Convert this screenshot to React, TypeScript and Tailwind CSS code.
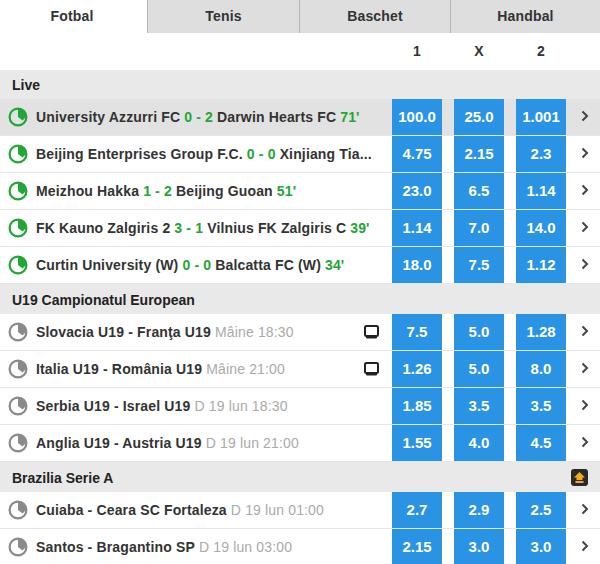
type TRow = {
  home: string;
  score?: string;
  away: string;
  minute?: string;
  time?: string;
  odds: [string, string, string];
  tv?: boolean;
  highlight?: boolean;
};

const tabs = [
  { label: "Fotbal", width: "w-[147px] pr-[3px]" },
  { label: "Tenis", width: "w-[152px]" },
  { label: "Baschet", width: "w-[151px]" },
  { label: "Handbal", width: "w-[150px]" },
];

const liveRows: TRow[] = [
  { home: "University Azzurri FC", score: "0 - 2", away: "Darwin Hearts FC", minute: "71'", odds: ["100.0", "25.0", "1.001"], highlight: true },
  { home: "Beijing Enterprises Group F.C.", score: "0 - 0", away: "Xinjiang Tia...", odds: ["4.75", "2.15", "2.3"] },
  { home: "Meizhou Hakka", score: "1 - 2", away: "Beijing Guoan", minute: "51'", odds: ["23.0", "6.5", "1.14"] },
  { home: "FK Kauno Zalgiris 2", score: "3 - 1", away: "Vilnius FK Zalgiris C", minute: "39'", odds: ["1.14", "7.0", "14.0"] },
  { home: "Curtin University (W)", score: "0 - 0", away: "Balcatta FC (W)", minute: "34'", odds: ["18.0", "7.5", "1.12"] },
];

const u19Rows: TRow[] = [
  { home: "Slovacia U19 - Franţa U19", away: "", time: "Mâine 18:30", odds: ["7.5", "5.0", "1.28"], tv: true },
  { home: "Italia U19 - România U19", away: "", time: "Mâine 21:00", odds: ["1.26", "5.0", "8.0"], tv: true },
  { home: "Serbia U19 - Israel U19", away: "", time: "D 19 lun 18:30", odds: ["1.85", "3.5", "3.5"] },
  { home: "Anglia U19 - Austria U19", away: "", time: "D 19 lun 21:00", odds: ["1.55", "4.0", "4.5"] },
];

const serieRows: TRow[] = [
  { home: "Cuiaba - Ceara SC Fortaleza", away: "", time: "D 19 lun 01:00", odds: ["2.7", "2.9", "2.5"] },
  { home: "Santos - Bragantino SP", away: "", time: "D 19 lun 03:00", odds: ["2.15", "3.0", "3.0"] },
];

function Clock({ live }: { live: boolean }) {
  const color = live ? "#22a637" : "#8a8a8a";
  return (
    <svg width="20" height="20" viewBox="0 0 20 20" className="shrink-0">
      <circle cx="10" cy="10" r="8.4" fill="none" stroke={color} strokeWidth="2.2" />
      <path d="M10 2 A8 8 0 0 1 18 10 L14.5 13.5 L10 10 Z" fill={color} />
    </svg>
  );
}

function TvIcon() {
  return (
    <svg width="15" height="14" viewBox="0 0 15 14" className="shrink-0">
      <rect x="1" y="1" width="13" height="10" rx="1.5" fill="none" stroke="#222" strokeWidth="2" />
      <rect x="2" y="11" width="11" height="2.4" rx="0.8" fill="#222" />
    </svg>
  );
}

function Chevron() {
  return (
    <svg width="8" height="12" viewBox="0 0 8 12">
      <path d="M1.5 1.5 L6 6 L1.5 10.5" fill="none" stroke="#444" strokeWidth="2" />
    </svg>
  );
}

function Row({ row }: { row: TRow }) {
  const live = !!row.score;
  return (
    <div className={`flex h-[37px] border-b border-[#e6e6e6] ${row.highlight ? "bg-[#e2e2e2]" : "bg-white"}`}>
      <div className="flex items-center min-w-0 w-[392px] pl-[8px] pr-[13px]">
        <Clock live={live} />
        <div className="ml-[8px] flex-1 min-w-0 whitespace-nowrap text-[14px] font-bold tracking-[0.15px] text-[#333]">
          {row.home}
          {row.score && <span className="text-[#22a637]"> {row.score} </span>}
          {row.away}
          {row.minute && <span className="text-[#22a637]"> {row.minute}</span>}
          {row.time && <span className="font-normal text-[#aaa]"> {row.time}</span>}
        </div>
        {row.tv && <TvIcon />}
      </div>
      <div className="flex gap-[12px]">
        {row.odds.map((odd, i) => (
          <div
            key={i}
            className="flex items-center justify-center w-[50px] h-[37px] border-b border-[#d9ecfa] bg-[#2b93e3] text-[15px] font-bold text-white"
          >
            {odd}
          </div>
        ))}
      </div>
      <div className="flex flex-1 items-center justify-center pl-[3px] pb-[2px]">
        <Chevron />
      </div>
    </div>
  );
}

function Section({ title, short, badge }: { title: string; short?: boolean; badge?: boolean }) {
  return (
    <div
      className={`flex items-center justify-between bg-[#e9e9e9] pl-[12px] pr-[12px] pt-[2px] text-[14px] font-bold text-[#222] ${
        short ? "h-[29px]" : "h-[30px]"
      }`}
    >
      <span>{title}</span>
      {badge && (
        <span className="-mt-[2px] flex h-[17px] w-[17px] items-center justify-center rounded-[3px] bg-[#2a2a2a]">
          <svg width="13" height="13" viewBox="0 0 13 13">
            <path d="M6.5 1 L12 6.5 H9.5 V9 H3.5 V6.5 H1 Z" fill="#f5a81c" />
            <rect x="2.5" y="10" width="8" height="2" fill="#f5a81c" />
          </svg>
        </span>
      )}
    </div>
  );
}

export default function App() {
  return (
    <div className="h-[564px] w-[600px] overflow-hidden bg-white font-['Liberation_Sans',Arial,sans-serif]">
      <div className="flex h-[33px]">
        {tabs.map((tab, i) => (
          <div
            key={tab.label}
            className={`flex items-center justify-center text-[14px] font-bold tracking-[0.15px] text-[#333] ${tab.width} ${
              i === 0 ? "bg-white" : "border-l border-[#b5b5b5] bg-[#dedede]"
            }`}
          >
            {tab.label}
          </div>
        ))}
      </div>
      <div className="flex h-[37px] items-center pl-[392px] text-[14px] font-bold text-[#333]">
        <div className="flex gap-[12px]">
          {["1", "X", "2"].map((h) => (
            <div key={h} className="w-[50px] text-center">
              {h}
            </div>
          ))}
        </div>
      </div>
      <Section title="Live" short />
      {liveRows.map((r) => (
        <Row key={r.home} row={r} />
      ))}
      <Section title="U19 Campionatul European" />
      {u19Rows.map((r) => (
        <Row key={r.home} row={r} />
      ))}
      <Section title="Brazilia Serie A" badge />
      {serieRows.map((r) => (
        <Row key={r.home} row={r} />
      ))}
    </div>
  );
}
